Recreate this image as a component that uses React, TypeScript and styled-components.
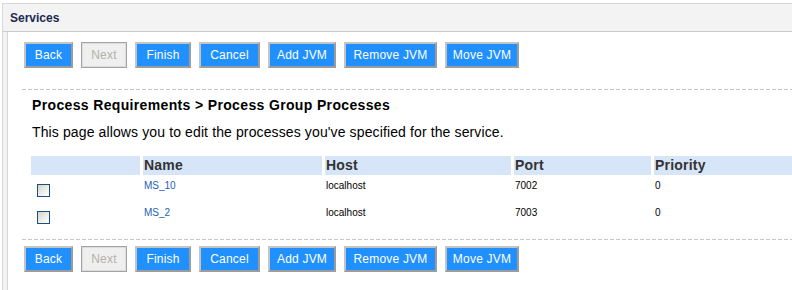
import React from "react";
import styled, { createGlobalStyle } from "styled-components";

const GlobalStyle = createGlobalStyle`
  html, body { margin: 0; padding: 0; background: #ffffff; overflow: hidden; }
  body { font-family: "Liberation Sans", Arial, sans-serif; }
`;

const Panel = styled.div`
  margin: 3px 0 0 2px;
  height: calc(100vh - 3px);
  display: flex;
  flex-direction: column;
  border-left: 1px solid #d8d8d8;
  border-top: 1px solid #d8d8d8;
  background: #f3f3f3;
`;

const Header = styled.div`
  flex: none;
  display: flex;
  align-items: center;
  padding: 1px 0 0 7px;
  box-sizing: content-box;
  height: 26px;
  border-bottom: 1px solid #cbcbcb;
  font-size: 12px;
  font-weight: bold;
  color: #1c2a50;
`;

const Body = styled.div`
  flex: 1;
  display: flex;
  padding-left: 4px;
  min-height: 0;
`;

const Content = styled.div`
  flex: 1;
  min-width: 0;
  overflow: hidden;
  background: #ffffff;
  border-left: 1px solid #d6d6d6;
  padding: 10px 0 0 14px;
`;

const ButtonRow = styled.div<{ $mt?: number }>`
  display: flex;
  gap: 8px;
  padding-left: 2px;
  margin-top: ${(p) => p.$mt ?? 0}px;
`;

const Btn = styled.button<{ $w: number }>`
  width: ${(p) => p.$w}px;
  height: 26px;
  box-sizing: border-box;
  padding: 0;
  margin: 0;
  background: #2190ff;
  color: #ffffff;
  font-family: "Liberation Sans", Arial, sans-serif;
  font-size: 12px;
  letter-spacing: 0.2px;
  border: 2px solid;
  border-color: #c4c4c4 #9c9c9c #9c9c9c #c4c4c4;
  cursor: pointer;

  &:disabled {
    background: #efefef;
    color: #b2b2aa;
    border: 1px solid #a4a4a4;
    box-shadow: inset 1px 1px 0 #dcdcdc, inset -1px -1px 0 #dcdcdc;
    cursor: default;
  }
`;

const Divider = styled.div<{ $mt: number }>`
  height: 1px;
  margin-top: ${(p) => p.$mt}px;
  background-image: repeating-linear-gradient(
    to right,
    #c6c6c6 0 4px,
    transparent 4px 6px
  );
`;

const Heading = styled.h2`
  margin: 7px 0 0 10px;
  font-size: 14px;
  line-height: 17px;
  font-weight: bold;
  color: #000000;
  letter-spacing: 0.35px;
  white-space: nowrap;
`;

const Description = styled.p`
  margin: 10px 0 0 10px;
  font-size: 14px;
  line-height: 17px;
  color: #000000;
  letter-spacing: 0.12px;
  white-space: nowrap;
`;

const Table = styled.table`
  margin: 15px 0 0 6px;
  border-collapse: separate;
  border-spacing: 3px 0;
  table-layout: fixed;
  width: 779px;
`;

const HeadCell = styled.th`
  background: #d7e5f9;
  height: 19px;
  box-sizing: border-box;
  padding: 1px 1px;
  text-align: left;
  font-size: 14px;
  line-height: 17px;
  font-weight: bold;
  color: #333333;
  letter-spacing: 0.2px;
`;

const Cell = styled.td`
  height: 27px;
  box-sizing: border-box;
  padding: 5px 1px 0;
  vertical-align: top;
  font-size: 10px;
  line-height: 12px;
  color: #000000;
`;

const CheckCell = styled(Cell)`
  padding: 9px 0 0 6px;
`;

const Check = styled.input`
  appearance: none;
  display: block;
  margin: 0;
  width: 13px;
  height: 13px;
  box-sizing: border-box;
  border: 1px solid #1c4f80;
  background: linear-gradient(135deg, #d4d4cc 0%, #f0f0ec 60%, #ffffff 100%);
`;

const Link = styled.a`
  color: #1b5fb8;
  text-decoration: none;
  font-size: 10px;
`;

const buttons: { label: string; w: number; disabled?: boolean }[] = [
  { label: "Back", w: 49 },
  { label: "Next", w: 46, disabled: true },
  { label: "Finish", w: 56 },
  { label: "Cancel", w: 61 },
  { label: "Add JVM", w: 68 },
  { label: "Remove JVM", w: 93 },
  { label: "Move JVM", w: 74 },
];

const rows = [
  { name: "MS_10", host: "localhost", port: "7002", priority: "0" },
  { name: "MS_2", host: "localhost", port: "7003", priority: "0" },
];

const Buttons: React.FC<{ mt?: number }> = ({ mt }) => (
  <ButtonRow $mt={mt}>
    {buttons.map((b) => (
      <Btn key={b.label} $w={b.w} disabled={b.disabled}>
        {b.label}
      </Btn>
    ))}
  </ButtonRow>
);

export default function App() {
  return (
    <>
      <GlobalStyle />
      <Panel>
        <Header>Services</Header>
        <Body>
          <Content>
            <Buttons />
            <Divider $mt={21} />
            <Heading>Process Requirements &gt; Process Group Processes</Heading>
            <Description>
              This page allows you to edit the processes you've specified for the service.
            </Description>
            <Table>
              <colgroup>
                <col style={{ width: 109 }} />
                <col style={{ width: 179 }} />
                <col style={{ width: 186 }} />
                <col style={{ width: 137 }} />
                <col style={{ width: 150 }} />
              </colgroup>
              <thead>
                <tr>
                  <HeadCell />
                  <HeadCell>Name</HeadCell>
                  <HeadCell>Host</HeadCell>
                  <HeadCell>Port</HeadCell>
                  <HeadCell>Priority</HeadCell>
                </tr>
              </thead>
              <tbody>
                {rows.map((r) => (
                  <tr key={r.name}>
                    <CheckCell>
                      <Check type="checkbox" />
                    </CheckCell>
                    <Cell>
                      <Link href="#">{r.name}</Link>
                    </Cell>
                    <Cell>{r.host}</Cell>
                    <Cell>{r.port}</Cell>
                    <Cell>{r.priority}</Cell>
                  </tr>
                ))}
              </tbody>
            </Table>
            <Divider $mt={10} />
            <Buttons mt={6} />
          </Content>
        </Body>
      </Panel>
    </>
  );
}
